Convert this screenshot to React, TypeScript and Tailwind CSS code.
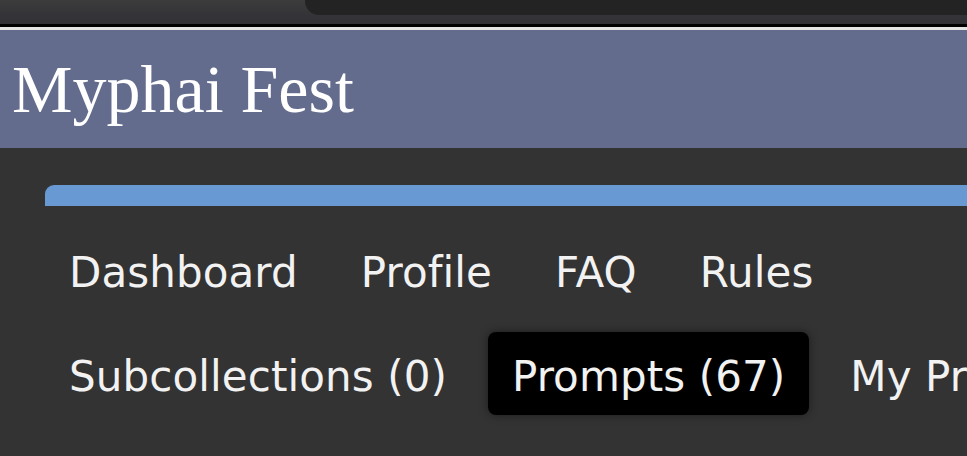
import type { ReactNode } from "react";

function NavItem({ active, children }: { active?: boolean; children: ReactNode }) {
  return (
    <div
      className={
        "shrink-0 rounded-lg px-6 pt-[23px] pb-[17px] text-[42px] leading-[43px] tracking-[0.1px] whitespace-nowrap text-[#f2f2f2] " +
        (active ? "bg-black shadow-[0_0_10px_rgba(0,0,0,0.45)]" : "")
      }
    >
      {children}
    </div>
  );
}

export default function App() {
  return (
    <div className="h-[456px] w-[967px] overflow-hidden bg-[#333333] font-['DejaVu_Sans',sans-serif]">
      {/* browser chrome strip */}
      <div className="relative h-6 bg-gradient-to-b from-[#3c3c3c] to-[#303036]">
        <div className="absolute right-0 top-0 h-[15px] w-[662px] rounded-bl-[14px] bg-[#232323]" />
      </div>
      <div className="h-[3px] bg-black" />
      <div className="h-[3px] bg-[#e4e4e4]" />

      <header className="flex h-[118px] items-center bg-[#636c8c] px-3">
        <h1 className="font-['Liberation_Serif',serif] text-[68px] leading-none text-white">
          Myphai Fest
        </h1>
      </header>

      <main className="pl-[45px] pt-[37px]">
        <div className="h-[21px] rounded-tl-[9px] bg-[#6899d2]" />
        <nav className="mt-[22px] flex flex-col gap-[21px]">
          <div className="flex gap-[15px]">
            <NavItem>Dashboard</NavItem>
            <NavItem>Profile</NavItem>
            <NavItem>FAQ</NavItem>
            <NavItem>Rules</NavItem>
          </div>
          <div className="flex gap-[17px]">
            <NavItem>Subcollections (0)</NavItem>
            <NavItem active>Prompts (67)</NavItem>
            <NavItem>My Prompts</NavItem>
          </div>
        </nav>
      </main>
    </div>
  );
}
